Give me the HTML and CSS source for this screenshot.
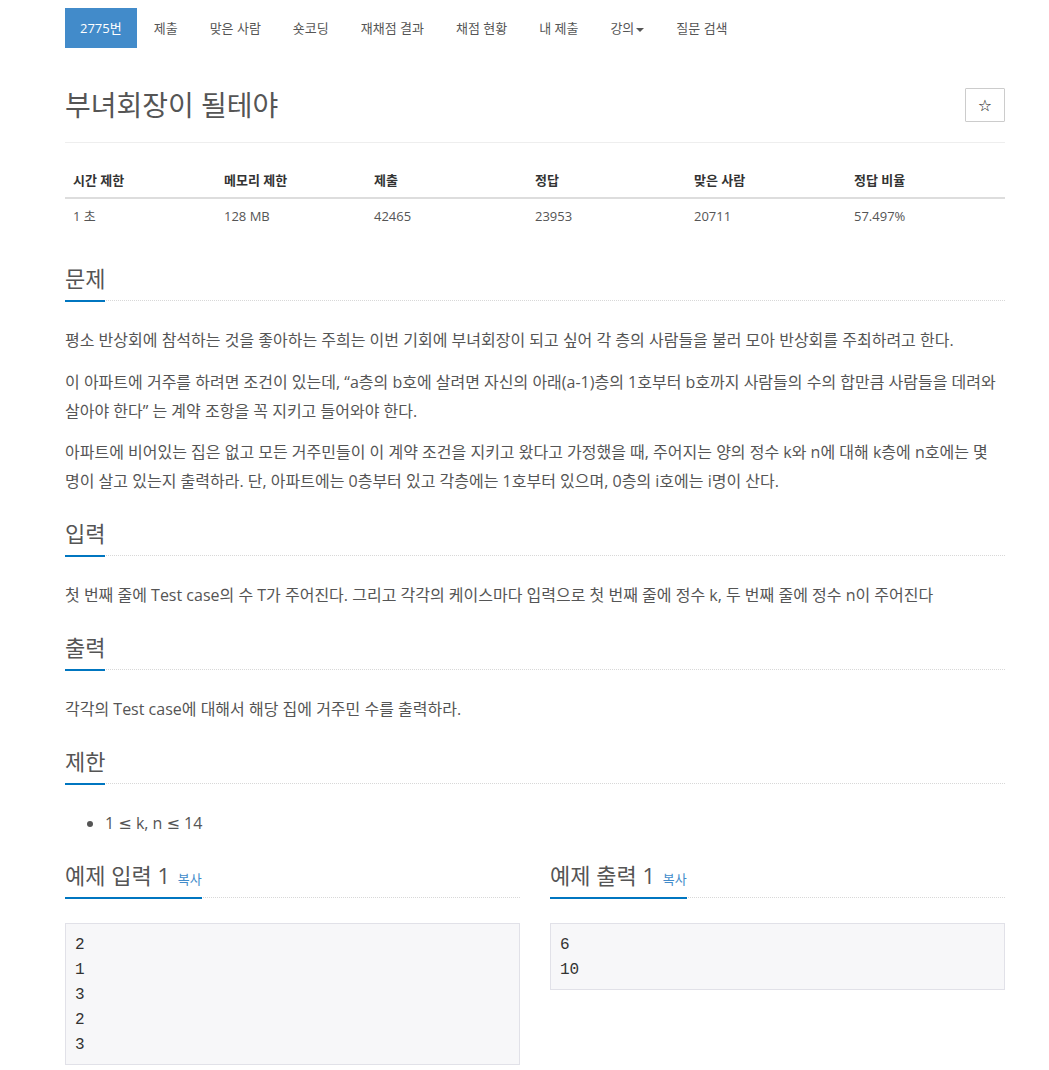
FILE: index.html
```html
<!DOCTYPE html>
<html lang="ko">
<head>
    <meta charset="UTF-8">
    <meta name="viewport" content="width=device-width, initial-scale=1.0">
    <title>2775번: 부녀회장이 될테야</title>
    <link rel="stylesheet" href="styles.css">
</head>
<body>
    <div class="page">
        <ul class="problem-menu">
            <li class="active"><a href="#">2775번</a></li>
            <li><a href="#">제출</a></li>
            <li><a href="#">맞은 사람</a></li>
            <li><a href="#">숏코딩</a></li>
            <li><a href="#">재채점 결과</a></li>
            <li><a href="#">채점 현황</a></li>
            <li><a href="#">내 제출</a></li>
            <li><a href="#">강의<span class="caret"></span></a></li>
            <li><a href="#">질문 검색</a></li>
        </ul>

        <div class="page-header">
            <h1 id="problem_title">부녀회장이 될테야</h1>
            <button class="btn-star" type="button">☆</button>
        </div>

        <table class="problem-info">
            <thead>
                <tr>
                    <th>시간 제한</th>
                    <th>메모리 제한</th>
                    <th>제출</th>
                    <th>정답</th>
                    <th>맞은 사람</th>
                    <th>정답 비율</th>
                </tr>
            </thead>
            <tbody>
                <tr>
                    <td>1 초</td>
                    <td>128 MB</td>
                    <td>42465</td>
                    <td>23953</td>
                    <td>20711</td>
                    <td>57.497%</td>
                </tr>
            </tbody>
        </table>

        <section class="problem-section">
            <div class="headline"><h2>문제</h2></div>
            <div class="problem-text">
                <p>평소 반상회에 참석하는 것을 좋아하는 주희는 이번 기회에 부녀회장이 되고 싶어 각 층의 사람들을 불러 모아 반상회를 주최하려고 한다.</p>
                <p>이 아파트에 거주를 하려면 조건이 있는데, “a층의 b호에 살려면 자신의 아래(a-1)층의 1호부터 b호까지 사람들의 수의 합만큼 사람들을 데려와 살아야 한다” 는 계약 조항을 꼭 지키고 들어와야 한다.</p>
                <p>아파트에 비어있는 집은 없고 모든 거주민들이 이 계약 조건을 지키고 왔다고 가정했을 때, 주어지는 양의 정수 k와 n에 대해 k층에 n호에는 몇 명이 살고 있는지 출력하라. 단, 아파트에는 0층부터 있고 각층에는 1호부터 있으며, 0층의 i호에는 i명이 산다.</p>
            </div>
        </section>

        <section class="problem-section">
            <div class="headline"><h2>입력</h2></div>
            <div class="problem-text">
                <p>첫 번째 줄에 Test case의 수 T가 주어진다. 그리고 각각의 케이스마다 입력으로 첫 번째 줄에 정수 k, 두 번째 줄에 정수 n이 주어진다</p>
            </div>
        </section>

        <section class="problem-section">
            <div class="headline"><h2>출력</h2></div>
            <div class="problem-text">
                <p>각각의 Test case에 대해서 해당 집에 거주민 수를 출력하라.</p>
            </div>
        </section>

        <section class="problem-section">
            <div class="headline"><h2>제한</h2></div>
            <div class="problem-text">
                <ul>
                    <li>1 <span class="rel">≤</span> k, n <span class="rel">≤</span> 14</li>
                </ul>
            </div>
        </section>

        <div class="samples">
            <section class="problem-section">
                <div class="headline"><h2>예제 입력 1 <a href="#" class="copy-button">복사</a></h2></div>
                <pre class="sampledata">2
1
3
2
3</pre>
            </section>
            <section class="problem-section">
                <div class="headline"><h2>예제 출력 1 <a href="#" class="copy-button">복사</a></h2></div>
                <pre class="sampledata">6
10</pre>
            </section>
        </div>
    </div>
</body>
</html>
```

FILE: styles.css
```css
body {
    margin: 0;
    font-family: "Open Sans", "Noto Sans CJK KR", sans-serif;
    font-size: 14px;
    color: #555;
    background: #fff;
}
.page {
    width: 940px;
    margin-left: 65px;
    padding-top: 8px;
}

/* problem menu */
.problem-menu {
    list-style: none;
    margin: 0;
    padding: 0;
    display: flex;
    gap: 2px;
}
.problem-menu a {
    display: block;
    padding: 10px 15px;
    line-height: 20px;
    font-size: 13px;
    color: #555;
    text-decoration: none;
}
.problem-menu .active a {
    background-color: #428bca;
    color: #fff;
}
.caret {
    display: inline-block;
    width: 0;
    height: 0;
    margin-left: 2px;
    vertical-align: middle;
    border-top: 4px solid;
    border-right: 4px solid transparent;
    border-left: 4px solid transparent;
}

/* title */
.page-header {
    display: flex;
    justify-content: space-between;
    align-items: center;
    margin-top: 40px;
    padding-bottom: 20px;
    border-bottom: 1px solid #eee;
}
.page-header h1 {
    margin: 0;
    font-size: 28px;
    font-weight: normal;
    line-height: 34px;
    color: #555;
}
.btn-star {
    width: 40px;
    height: 34px;
    padding: 0;
    border: 1px solid #ccc;
    border-radius: 1px;
    background: #fff;
    color: #111;
    font-size: 16px;
    font-family: "DejaVu Sans", sans-serif;
}

/* info table */
.problem-info {
    width: 100%;
    table-layout: fixed;
    border-collapse: collapse;
    margin: 20px 0 30px;
    font-size: 13px;
}
.problem-info th,
.problem-info td {
    padding: 8px;
    line-height: 18px;
    text-align: left;
}
.problem-info th {
    font-weight: bold;
    color: #333;
    border-bottom: 2px solid #ddd;
}
.problem-info th:nth-child(1) { width: 135px; }
.problem-info th:nth-child(2) { width: 134px; }
.problem-info th:nth-child(3) { width: 145px; }
.problem-info th:nth-child(4) { width: 143px; }
.problem-info th:nth-child(5) { width: 144px; }

/* sections */
.problem-section {
    margin-bottom: 22px;
}
.headline {
    display: flex;
    border-bottom: 1px dotted #d8d8d8;
    margin-bottom: 25px;
}
.headline h2 {
    margin: 0 0 -2px;
    padding-bottom: 7px;
    font-size: 22px;
    font-weight: normal;
    line-height: 30px;
    height: 30px;
    color: #555;
    border-bottom: 2px solid #0076c0;
}
.copy-button {
    margin-left: 2px;
    font-size: 13px;
    line-height: 1;
    color: #428bca;
    text-decoration: none;
}
.problem-text {
    font-size: 16px;
    line-height: 29px;
    word-break: keep-all;
}
.problem-text p {
    margin: 0 0 12.5px;
}
.problem-text p:last-child {
    margin-bottom: 0;
}
.problem-text ul {
    margin: 0;
    padding-left: 40px;
}
.rel {
    font-family: "DejaVu Sans", sans-serif;
}

/* samples */
.samples {
    display: grid;
    grid-template-columns: 1fr 1fr;
    gap: 30px;
}
.sampledata {
    margin: 0;
    padding: 9px 9px 6px;
    border: 1px solid #e1e1e8;
    background-color: #f7f7f9;
    font-family: "Liberation Mono", monospace;
    font-size: 16px;
    line-height: 25px;
    color: #333;
}
```
